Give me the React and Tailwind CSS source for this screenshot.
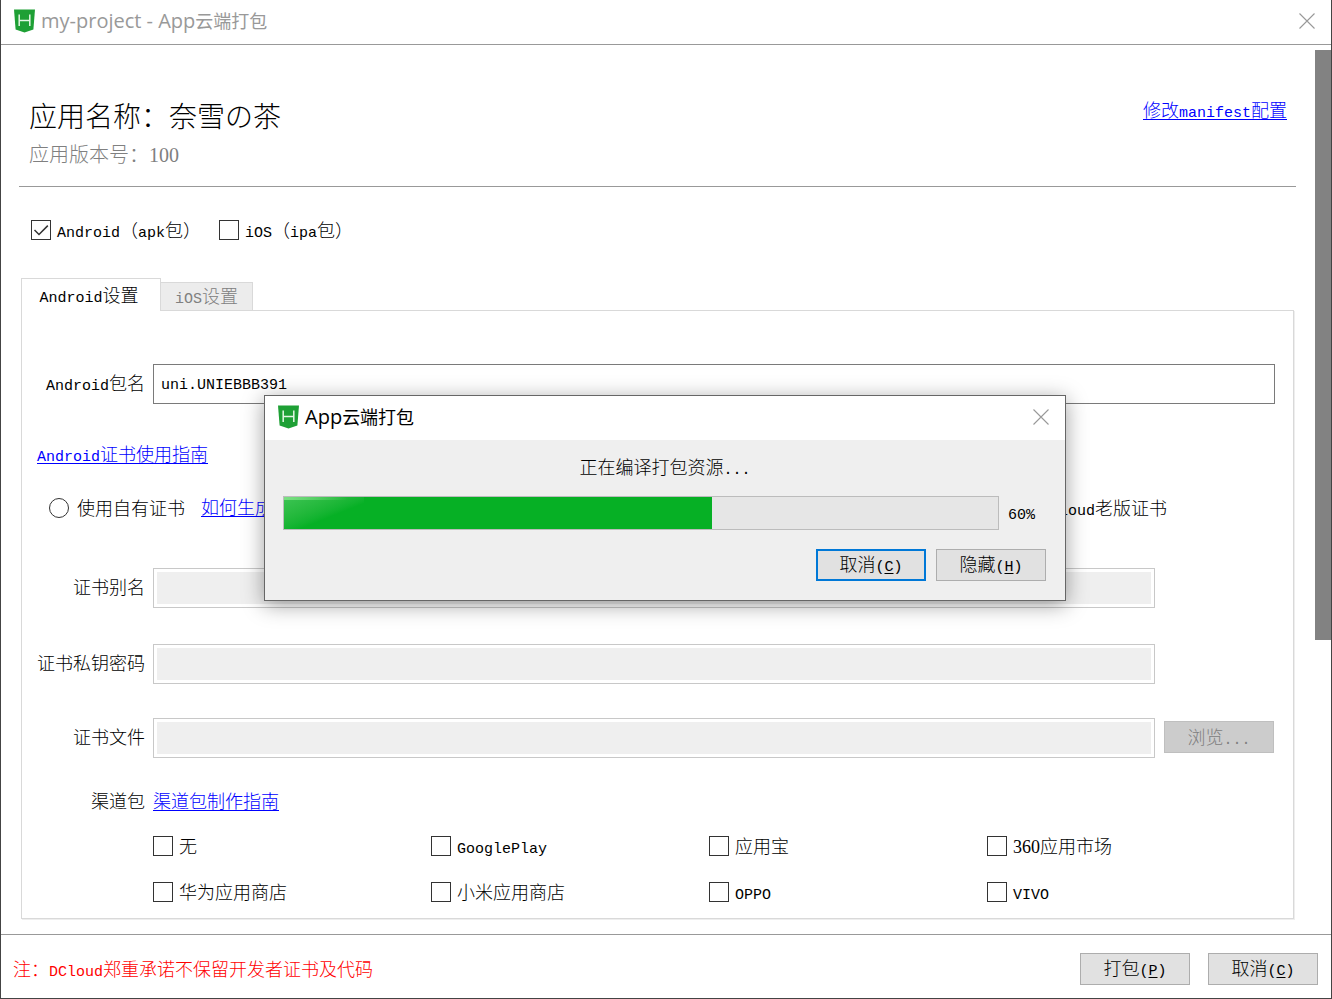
import React from "react";

const FONT = "font-['Noto_Sans_CJK_SC',sans-serif] font-light";
const UI_FONT = "font-['Open_Sans','Noto_Sans_CJK_SC',sans-serif] font-normal";

/*
 * Latin runs are set in a monospace face that is half as wide as a CJK glyph;
 * plain numbers use a serif face whose digits have that same width.
 */
function T({ children }) {
  return children.split(/([\x20-\x7e]+)/).map((part, i) => {
    if (/^\d+$/.test(part)) {
      return <span key={i} className="font-['Liberation_Serif',serif] leading-none font-normal">{part}</span>;
    }
    if (/^[\x20-\x7e]+$/.test(part)) {
      return <span key={i} className="font-['Liberation_Mono',monospace] text-[15px] leading-none font-normal">{part}</span>;
    }
    return part;
  });
}

function Logo() {
  return (
    <svg viewBox="0 0 21 24" className="h-6 w-[21px] shrink-0" aria-hidden="true">
      <path d="M0 0.5H21L19.4 20.6L10.5 23.6L1.6 20.6Z" fill="#1ea035" />
      <path d="M5.2 5.5V17M15.8 5.5V17M5.2 11.6H15.8" stroke="#e4f6e4" strokeWidth="1.5" fill="none" />
    </svg>
  );
}

function CloseButton() {
  return (
    <button type="button" aria-label="关闭" className="flex size-4 items-center justify-center">
      <svg viewBox="0 0 16 16" className="size-4" aria-hidden="true">
        <path d="M0.5 0.5L15.5 15.5M15.5 0.5L0.5 15.5" stroke="#999" strokeWidth="1.1" fill="none" />
      </svg>
    </button>
  );
}

function Check({ label, checked = false }) {
  return (
    <label className="flex h-5 items-center gap-1.5 whitespace-nowrap">
      <span className="relative block size-5">
        <input
          type="checkbox"
          defaultChecked={checked}
          className="peer block size-5 appearance-none border border-[#333] bg-white"
        />
        <svg viewBox="0 0 20 20" className="pointer-events-none absolute inset-0 hidden size-5 peer-checked:block" aria-hidden="true">
          <path d="M3.5 10L8 14.5L16.8 5.6" stroke="#333" strokeWidth="1.5" fill="none" />
        </svg>
      </span>
      <span className="pb-0.5"><T>{label}</T></span>
    </label>
  );
}

function Radio({ label }) {
  return (
    <label className="flex h-6 items-center gap-2 whitespace-nowrap">
      <input
        type="radio"
        name="cert"
        className="block size-5 appearance-none rounded-full border border-[#333] bg-white checked:border-[6px]"
      />
      <span className="pb-0.5"><T>{label}</T></span>
    </label>
  );
}

function Link({ children }) {
  return (
    <a href="#" className="whitespace-nowrap text-[#0000ff] underline decoration-1 underline-offset-2">
      <T>{children}</T>
    </a>
  );
}

function PushButton({ label, hotkey, primary = false }) {
  const edge = primary ? "border-2 border-[#0078d7]" : "border border-[#adadad]";
  return (
    <button type="button" className={`flex h-8 w-[110px] items-center justify-center bg-[#e1e1e1] pb-1 ${edge}`}>
      <span>
        {label}
        <span className="font-['Liberation_Mono',monospace] text-[15px] leading-none font-normal">
          (<span className="underline underline-offset-2">{hotkey}</span>)
        </span>
      </span>
    </button>
  );
}

function CertField({ id, label, className, children }) {
  return (
    <div className={`flex items-center gap-2 ${className}`}>
      <label htmlFor={id} className="w-[123px] shrink-0 pb-1 text-right">{label}</label>
      <input id={id} disabled className="h-10 min-w-0 flex-1 border border-[#c8c8c8] bg-[#efefef] shadow-[inset_0_0_0_3px_#fff]" />
      <div className="flex w-28 shrink-0 justify-end pr-px pb-0.5">{children}</div>
    </div>
  );
}

const CHANNELS = ["无", "GooglePlay", "应用宝", "360应用市场", "华为应用商店", "小米应用商店", "OPPO", "VIVO"];

function ProgressDialog({ percent }) {
  return (
    <div className="absolute inset-0 flex items-center justify-center pr-0.5 pb-0.5">
      <div
        role="dialog"
        aria-labelledby="progress-title"
        className="w-[802px] border border-[#666] bg-[#efefef] shadow-[0_4px_20px_rgba(0,0,0,0.38)]"
      >
        <div className="flex h-11 items-center gap-1.5 bg-white pr-4 pb-0.5 pl-[13px]">
          <Logo />
          <h2 id="progress-title" className={`flex-1 text-lg text-black ${UI_FONT}`}>
            <span className="text-xl leading-none">App</span>云端打包
          </h2>
          <CloseButton />
        </div>
        <p className="mt-3.5 text-center leading-6"><T>正在编译打包资源...</T></p>
        <div className="mt-[18px] flex items-center gap-[9px] pr-[27px] pl-[18px]">
          <div
            role="progressbar"
            aria-valuenow={percent}
            aria-valuemin={0}
            aria-valuemax={100}
            className="h-[34px] flex-1 border border-[#bcbcbc] bg-[#e6e6e6]"
          >
            <div className="h-full bg-[#06b025]" style={{ width: `${percent}%` }}>
              <div className="h-full w-20 bg-linear-to-br from-[#3cc453] via-[#14b431] to-[#06b025] to-60%">
                <div className="h-[3px] w-16 bg-linear-to-r from-[#7be083] to-transparent" />
              </div>
            </div>
          </div>
          <span className="w-[30px] pb-1"><T>{`${percent}%`}</T></span>
        </div>
        <div className="mt-[19px] mb-[19px] flex justify-end gap-2.5 pr-[19px]">
          <PushButton label="取消" hotkey="C" primary />
          <PushButton label="隐藏" hotkey="H" />
        </div>
      </div>
    </div>
  );
}

export default function App() {
  return (
    <div className={`relative flex min-h-screen flex-col border-x border-b border-[#444] bg-white text-lg leading-6 text-black ${FONT}`}>
      <header className="flex h-[45px] items-center gap-1.5 border-b border-[#999] pr-4 pb-0.5 pl-[13px]">
        <Logo />
        <h1 className={`flex-1 text-lg text-[#999] ${UI_FONT}`}>
          <span className="text-xl leading-none">my-project - App</span>云端打包
        </h1>
        <CloseButton />
      </header>

      <div className="flex flex-1">
        <main className="min-w-0 flex-1 pr-[19px] pb-[15px] pl-[18px]">
          <section className="flex items-start justify-between border-b border-[#999] pt-[51px] pr-[9px] pb-5 pl-2.5">
            <div>
              <h2 className="text-[28px] leading-[38px]">应用名称：奈雪の茶</h2>
              <p className="mt-2 text-xl leading-6 text-[#808080]"><T>应用版本号：100</T></p>
            </div>
            <div className="pt-px"><Link>修改manifest配置</Link></div>
          </section>

          <div className="mt-[33px] flex gap-[18px] pl-3">
            <Check label="Android（apk包）" checked />
            <Check label="iOS（ipa包）" />
          </div>

          <div className="mt-[38px] pr-0.5 pl-0.5">
            <div role="tablist" className="flex items-end">
              <button
                type="button"
                role="tab"
                aria-selected="true"
                className="relative z-10 -mb-px h-[33px] w-[140px] border border-b-0 border-[#d9d9d9] bg-white pr-1 pb-[3px]"
              >
                <T>Android设置</T>
              </button>
              <button
                type="button"
                role="tab"
                aria-selected="false"
                className="h-7 w-[92px] border border-b-0 border-l-0 border-[#d9d9d9] bg-[#ececec] pb-[3px] text-[#808080]"
              >
                <T>iOS设置</T>
              </button>
            </div>

            <div role="tabpanel" className="border border-[#d9d9d9] pt-[53px] pr-[18px] pb-4 shadow-[1px_1px_0_#eee]">
              <div className="flex items-center gap-2">
                <label htmlFor="pkg" className="w-[123px] shrink-0 pb-1 text-right"><T>Android包名</T></label>
                <input
                  id="pkg"
                  defaultValue="uni.UNIEBBB391"
                  className="h-10 min-w-0 flex-1 border border-[#7a7a7a] px-[7px] pt-[3px] font-['Liberation_Mono',monospace] text-[15px] font-normal"
                />
              </div>

              <div className="mt-[37px] h-6 pl-[15px]"><Link>Android证书使用指南</Link></div>

              <div className="mt-[31px] flex h-6 justify-between pr-[108px] pl-[27px]">
                <div className="flex gap-4 leading-5">
                  <Radio label="使用自有证书" />
                  <Link>如何生成证书</Link>
                </div>
                <Radio label="使用DCloud老版证书" />
              </div>

              <CertField id="alias" label="证书别名" className="mt-12" />
              <CertField id="key" label="证书私钥密码" className="mt-9" />
              <CertField id="file" label="证书文件" className="mt-[34px]">
                <button type="button" disabled className="h-8 w-[110px] border border-[#bfbfbf] bg-[#ccc] pb-0.5 text-[#808080]">
                  <T>浏览...</T>
                </button>
              </CertField>

              <div className="mt-[30px] flex gap-2">
                <span className="w-[123px] shrink-0 text-right">渠道包</span>
                <Link>渠道包制作指南</Link>
              </div>

              <div className="mt-6 grid grid-cols-4 gap-y-[26px] pr-2.5 pl-[131px]">
                {CHANNELS.map((name) => (
                  <Check key={name} label={name} />
                ))}
              </div>
            </div>
          </div>
        </main>

        <div className="w-4 pt-[5px]">
          <div className="h-[590px] bg-[#828282]" />
        </div>
      </div>

      <footer className="flex items-center justify-between border-t border-[#999] pt-[18px] pr-[13px] pb-[13px] pl-3">
        <p className="pb-0.5 text-[#ff0000]"><T>注：DCloud郑重承诺不保留开发者证书及代码</T></p>
        <div className="flex gap-[18px]">
          <PushButton label="打包" hotkey="P" />
          <PushButton label="取消" hotkey="C" />
        </div>
      </footer>

      <ProgressDialog percent={60} />
    </div>
  );
}
